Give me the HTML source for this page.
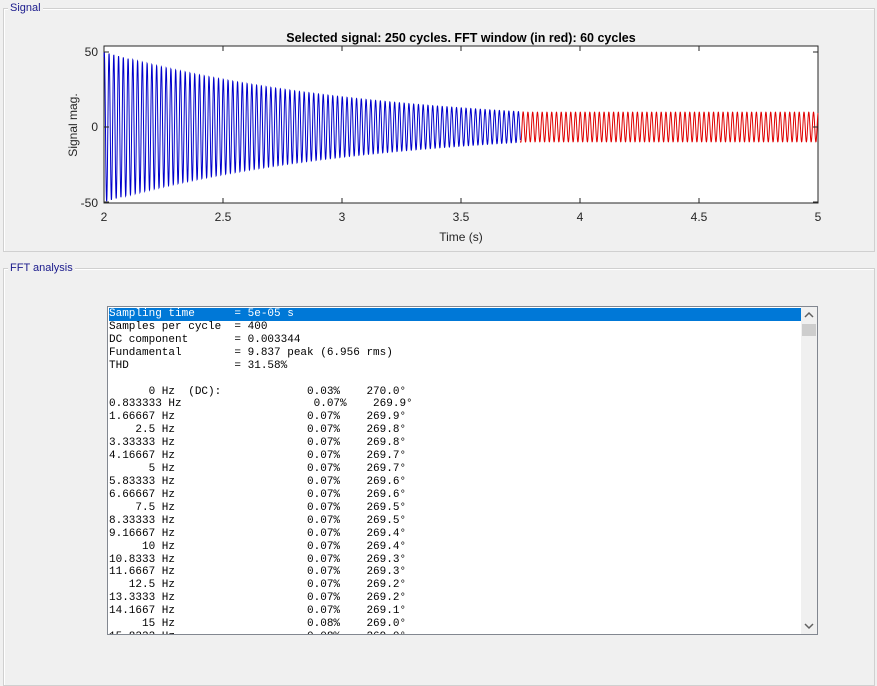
<!DOCTYPE html>
<html><head><meta charset="utf-8"><style>
body{margin:0;width:877px;height:686px;background:#f0f0f0;position:relative;overflow:hidden;font-family:"Liberation Sans",sans-serif}
.grp{position:absolute;border:1px solid #d0d0d0;box-shadow:inset 1px 1px 0 #fff}
.lbl{position:absolute;background:#f0f0f0;color:#1a1a8c;font-size:11px;padding:0 2px;line-height:12px}
#lb{position:absolute;left:107px;top:306px;width:709px;height:327px;background:#fff;border:1px solid #828790;overflow:hidden}
pre{margin:0;font-family:"Liberation Mono",monospace;font-size:11px;line-height:12.92px;position:absolute;left:1px;top:1px;color:#000}
.sel{background:#0078d7;color:#fff;display:block;width:692px}
#sb{position:absolute;right:0;top:0;width:16px;height:327px;background:#f0f0f0}
</style></head><body>
<div class="grp" style="left:3px;top:8px;width:870px;height:242px"></div>
<div class="lbl" style="left:8px;top:2px">Signal</div>
<div class="grp" style="left:3px;top:268px;width:870px;height:416px"></div>
<div class="lbl" style="left:8px;top:262px">FFT analysis</div>
<svg style="position:absolute;left:0;top:0" width="877" height="260">
<text x="461" y="42" font-size="12.5" font-weight="bold" text-anchor="middle" font-family="Liberation Sans">Selected signal: 250 cycles. FFT window (in red): 60 cycles</text>
<rect x="104" y="46" width="714" height="157" fill="#fff" stroke="#262626" stroke-width="1"/>
<g id="sig"></g>
<g stroke="#262626" stroke-width="1" id="ticks"></g>
<g font-size="12" fill="#262626" font-family="Liberation Sans" text-anchor="end">
<text x="98" y="56">50</text><text x="98" y="131">0</text><text x="98" y="207">-50</text></g>
<g font-size="12" fill="#262626" font-family="Liberation Sans" text-anchor="middle">
<text x="104" y="221">2</text><text x="223" y="221">2.5</text><text x="342" y="221">3</text><text x="461" y="221">3.5</text><text x="580" y="221">4</text><text x="699" y="221">4.5</text><text x="818" y="221">5</text>
<text x="461" y="241">Time (s)</text>
<text transform="translate(77,125) rotate(-90)">Signal mag.</text></g>
</svg>
<div id="lb"><pre><span class="sel">Sampling time      = 5e-05 s</span>Samples per cycle  = 400
DC component       = 0.003344
Fundamental        = 9.837 peak (6.956 rms)
THD                = 31.58%

      0 Hz  (DC):             0.03%    270.0°
0.833333 Hz                    0.07%    269.9°
1.66667 Hz                    0.07%    269.9°
    2.5 Hz                    0.07%    269.8°
3.33333 Hz                    0.07%    269.8°
4.16667 Hz                    0.07%    269.7°
      5 Hz                    0.07%    269.7°
5.83333 Hz                    0.07%    269.6°
6.66667 Hz                    0.07%    269.6°
    7.5 Hz                    0.07%    269.5°
8.33333 Hz                    0.07%    269.5°
9.16667 Hz                    0.07%    269.4°
     10 Hz                    0.07%    269.4°
10.8333 Hz                    0.07%    269.3°
11.6667 Hz                    0.07%    269.3°
   12.5 Hz                    0.07%    269.2°
13.3333 Hz                    0.07%    269.2°
14.1667 Hz                    0.07%    269.1°
     15 Hz                    0.08%    269.0°
15.8333 Hz                    0.08%    269.0°</pre>
<div id="sb"><svg width="16" height="327"><path d="M4 10 L8 6 L12 10" fill="none" stroke="#606060" stroke-width="1.5"/><rect x="1" y="17" width="14" height="12" fill="#cdcdcd"/><path d="M4 317 L8 321 L12 317" fill="none" stroke="#606060" stroke-width="1.5"/></svg></div>
</div>
<script>
var x0=104,w=714,y0=127,s=1.5,b="",r="";
for(var i=0;i<=6000;i++){var t=2+3*i/6000;var env=Math.max(9.9,50*Math.exp(-(t-2)/1.1));
var v=env*Math.sin(2*Math.PI*50*t+1.2);if(v>50)v=50;if(v<-50)v=-50;
var px=(x0+w*(t-2)/3).toFixed(2),py=(y0-v*s).toFixed(2);
if(t<3.75){b+=(b?"L":"M")+px+" "+py}else{if(!r)r="M"+px+" "+py;else r+="L"+px+" "+py}}
document.getElementById("sig").innerHTML='<path d="'+b+'" fill="none" stroke="#0000cc" stroke-width="1"/><path d="'+r+'" fill="none" stroke="#e00000" stroke-width="1"/>';
var tk="";[104,223,342,461,580,699,818].forEach(function(x){tk+='<line x1="'+x+'" y1="203" x2="'+x+'" y2="198"/><line x1="'+x+'" y1="46" x2="'+x+'" y2="51"/>'});
[52,127,202].forEach(function(y){tk+='<line x1="104" y1="'+y+'" x2="109" y2="'+y+'"/><line x1="818" y1="'+y+'" x2="813" y2="'+y+'"/>'});
document.getElementById("ticks").innerHTML=tk;
</script>
</body></html>
